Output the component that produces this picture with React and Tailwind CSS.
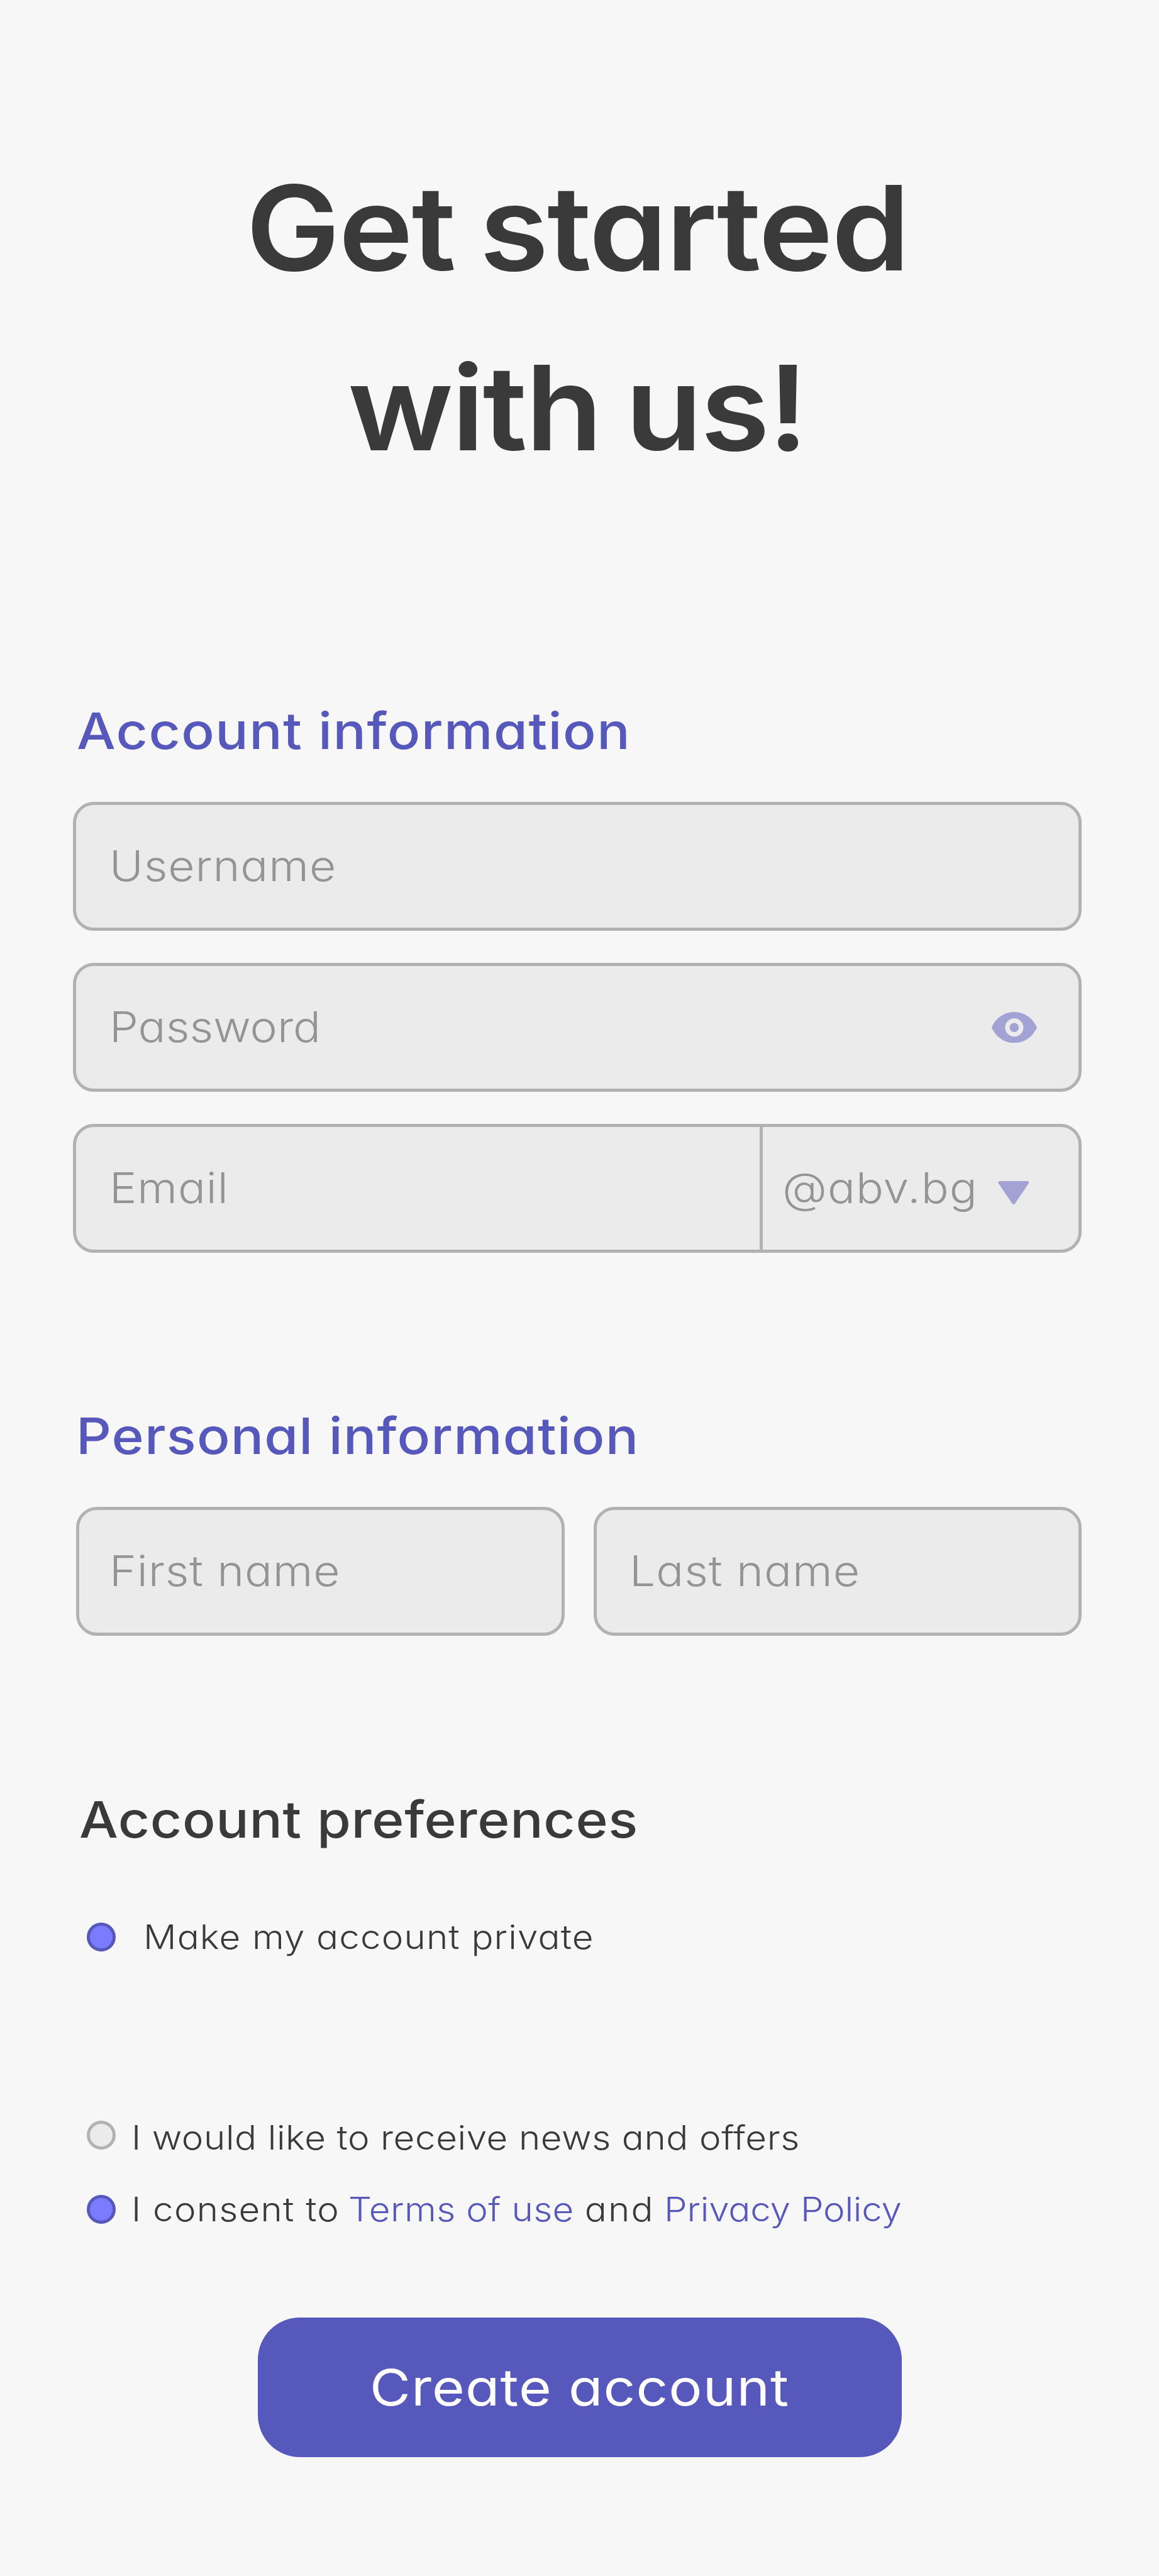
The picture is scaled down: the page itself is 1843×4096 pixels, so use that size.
const field =
  "flex h-[204.8px] items-center rounded-[33.3px] border-[5.12px] border-[#b2b2b2] bg-[#ebebeb]";
const placeholder =
  "block origin-left scale-x-[1.09] whitespace-nowrap pb-px text-[67px] leading-[80px] font-light text-[#949494]";
const heading =
  "origin-left scale-x-[1.09] whitespace-nowrap text-[80px] leading-[100px] font-medium";
const option =
  "origin-left scale-x-[1.09] whitespace-nowrap text-[53.5px] leading-[80px] font-light";

function EyeIcon() {
  return (
    <svg viewBox="0 0 84 58" className="h-[49.5px] w-[71.7px]" fill="#a3a2d4">
      <path
        fillRule="evenodd"
        d="M42 0C23.500 0 8.500 11 .5 27.200a3.400 3.400 0 0 0 0 3.600C8.500 47 23.500 58 42 58s33.500-11 41.500-27.200a3.400 3.400 0 0 0 0-3.600C75.500 11 60.500 0 42 0Zm0 46a17 17 0 1 1 0-34 17 17 0 0 1 0 34Z"
      />
      <circle cx="42" cy="29" r="8.5" />
    </svg>
  );
}

function TriangleIcon() {
  return (
    <svg viewBox="0 0 58 44" className="mt-[14px] h-[37.5px] w-[49.5px]">
      <polygon
        points="3,2.7 55,2.7 29,41"
        fill="#a3a2d4"
        stroke="#a3a2d4"
        strokeWidth="5.4"
        strokeLinejoin="round"
      />
    </svg>
  );
}

function Radio({ checked, className = "" }) {
  const tone = checked ? "border-[#5758bb] bg-[#7b7bff]" : "border-[#b2b2b2] bg-[#ebebeb]";
  return (
    <span
      className={`block size-[46px] shrink-0 rounded-full border-[5.12px] ${tone} ${className}`}
    />
  );
}

export default function App() {
  return (
    <main className="flex h-[4096px] w-[1843px] flex-col overflow-hidden bg-[#f7f7f7] pt-[218.6px] font-['Inter',sans-serif] text-[#3a3a3a] [font-feature-settings:'cv11']">
      <h1 className="text-[187px] leading-[286.72px] font-semibold [word-spacing:-8px]">
        <span className="ml-[391px] block w-fit origin-left scale-x-[1.07] tracking-[-2.15px] whitespace-nowrap">
          Get started
        </span>
        <span className="ml-[552.5px] block w-fit origin-left scale-x-[1.07] tracking-[-2.7px] whitespace-nowrap">
          with us!
        </span>
      </h1>

      <section className="mt-[320.2px] flex flex-col">
        <h2 className={`${heading} ml-[121.5px] w-fit tracking-[1.35px] text-[#5758bb]`}>
          Account information
        </h2>
        <div className="mt-[62.7px] mr-[122.7px] ml-[116px] flex flex-col gap-[51.2px]">
          <div className={`${field} pl-[52.5px]`}>
            <span className={`${placeholder} tracking-[0.85px]`}>Username</span>
          </div>
          <div className={`${field} justify-between pr-[66.6px] pl-[52.5px]`}>
            <span className={`${placeholder} tracking-[0.1px]`}>Password</span>
            <EyeIcon />
          </div>
          <div className={`${field} pl-[52.5px]`}>
            <span className={`${placeholder} w-[1034.7px] tracking-[0.8px]`}>Email</span>
            <div className="flex h-full items-center border-l-[5.12px] border-[#b2b2b2] pl-[30.7px]">
              <span className={`${placeholder} w-[343px] tracking-[0.95px]`}>@abv.bg</span>
              <TriangleIcon />
            </div>
          </div>
        </div>
      </section>

      <section className="mt-[241.7px] flex flex-col">
        <h2 className={`${heading} ml-[120.8px] w-fit tracking-[1.05px] text-[#5758bb]`}>
          Personal information
        </h2>
        <div className="mt-[62.8px] mr-[122.7px] ml-[121.2px] grid grid-cols-2 gap-[46px]">
          <div className={`${field} pl-[47.4px]`}>
            <span className={`${placeholder} tracking-[0.75px]`}>First name</span>
          </div>
          <div className={`${field} pl-[51.9px]`}>
            <span className={`${placeholder} tracking-[0.9px]`}>Last name</span>
          </div>
        </div>
      </section>

      <section className="mt-[241.7px] flex flex-col">
        <h2 className={`${heading} ml-[126.4px] w-fit tracking-[0.64px]`}>Account preferences</h2>
        <label className="mt-[97.1px] ml-[138.4px] flex items-center">
          <Radio checked />
          <span className={`${option} block ml-[43.2px] tracking-[1.03px]`}>
            Make my account private
          </span>
        </label>
      </section>

      <section className="mt-[239.2px] ml-[138.4px] flex flex-col gap-[34.3px]">
        <label className="flex items-center">
          <Radio className="mb-[7.2px]" />
          <span className={`${option} block ml-[24.8px] tracking-[0.52px]`}>
            I would like to receive news and offers
          </span>
        </label>
        <label className="flex items-center">
          <Radio checked />
          <span className={`${option} flex ml-[24.8px]`}>
            <span className="w-[316.5px] tracking-[1.1px]">I consent to</span>
            <a className="w-[344.7px] tracking-[0.32px] text-[#5758bb]">Terms of use</a>
            <span className="w-[115.9px] tracking-[2px]">and</span>
            <a className="tracking-[-0.18px] text-[#5758bb]">Privacy Policy</a>
          </span>
        </label>
      </section>

      <button className="mt-[131.4px] ml-[409.6px] flex h-[221.9px] w-[1024px] items-center justify-center rounded-[67px] bg-[#5758bb] text-[80px] leading-[100px] font-normal text-white">
        <span className="scale-x-[1.11] tracking-[1.05px] whitespace-nowrap">
          Create account
        </span>
      </button>
    </main>
  );
}
